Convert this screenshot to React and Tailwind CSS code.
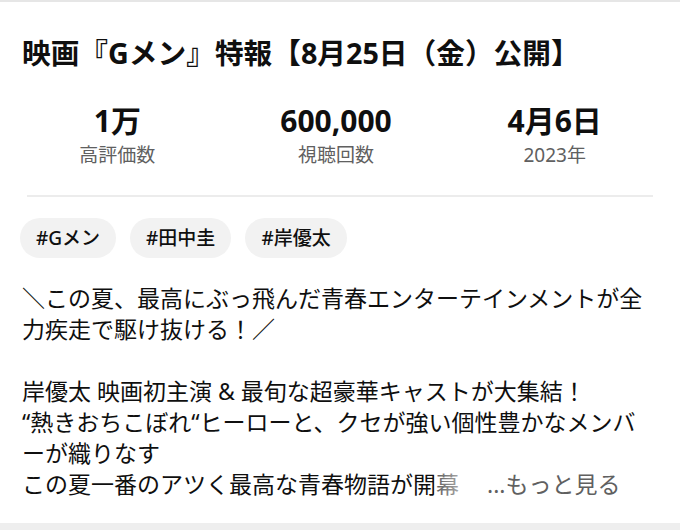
export default function App() {
  const stats = [
    { v: "1万", l: "高評価数" },
    { v: "600,000", l: "視聴回数" },
    { v: "4月6日", l: "2023年" },
  ];
  const tags = ["#Gメン", "#田中圭", "#岸優太"];
  return (
    <div className="w-[680px] h-[530px] bg-white overflow-hidden flex flex-col text-[#0f0f0f] font-['Noto_Sans','Noto_Sans_CJK_JP',sans-serif]">
      <div className="h-[2px] bg-[#e6e6e6]" />
      <h1 className="mt-[33px] px-[22px] text-[28.7px] leading-[36px] font-bold whitespace-nowrap">
        映画『Gメン』特報【8月25日（金）公開】
      </h1>
      <div className="mt-[34px] grid grid-cols-3 pl-[8px] pr-[16px]">
        {stats.map((s) => (
          <div key={s.l} className="flex flex-col items-center gap-[6px]">
            <div className="text-[30px] leading-[32px] font-bold">{s.v}</div>
            <div className="text-[19px] leading-[24px] text-[#606060]">{s.l}</div>
          </div>
        ))}
      </div>
      <div className="mt-[28px] mx-[27px] h-[2px] bg-[#ececec]" />
      <div className="mt-[21px] px-5 flex gap-[14px]">
        {tags.map((t) => (
          <div key={t} className="h-10 px-4 rounded-full bg-[#f2f2f2] flex items-center text-[19px] font-medium">
            {t}
          </div>
        ))}
      </div>
      <div className="mt-[25px] px-[22px] text-[23px] leading-[31px] whitespace-nowrap">
        <div>＼この夏、最高にぶっ飛んだ青春エンターテインメントが全</div>
        <div>力疾走で駆け抜ける！／</div>
        <div>&nbsp;</div>
        <div>岸優太 映画初主演 &amp; 最旬な超豪華キャストが大集結！</div>
        <div>“熱きおちこぼれ“ヒーローと、クセが強い個性豊かなメンバ</div>
        <div>ーが織りなす</div>
        <div className="relative">
          この夏一番のアツく最高な青春物語が開幕
          <div className="absolute top-0 left-[412px] h-full flex">
            <div className="w-[53px] h-full bg-gradient-to-r from-white/30 to-white" />
            <div className="bg-white pr-10 text-[#606060]">...もっと見る</div>
          </div>
        </div>
      </div>
      <div className="mt-auto h-[7px] bg-[#eeeeee]" />
    </div>
  );
}
